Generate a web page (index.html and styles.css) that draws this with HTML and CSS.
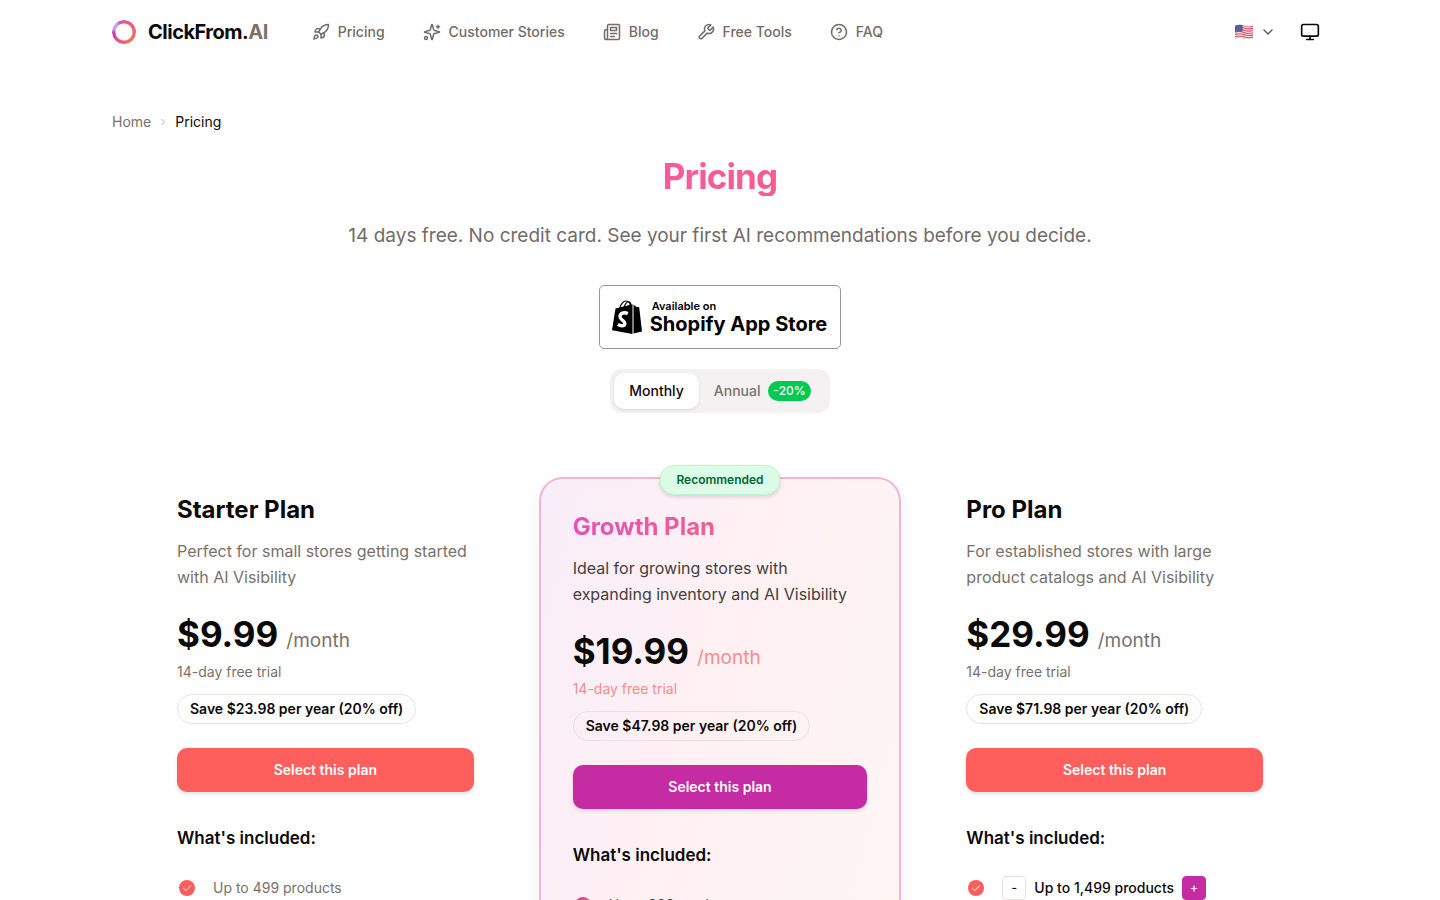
FILE: index.html
```html
<!DOCTYPE html>
<html lang="en">
<head>
<meta charset="utf-8">
<meta name="viewport" content="width=device-width, initial-scale=1">
<title>Pricing - ClickFrom.AI</title>
<link rel="stylesheet" href="styles.css">
</head>
<body>
<svg class="sprite" aria-hidden="true">
  <symbol id="check" viewBox="0 0 16 16"><path d="M4.600 8.400 7 10.600 11.500 5.800" fill="none" stroke="#fff" stroke-width="1" stroke-linecap="round" stroke-linejoin="round"/></symbol>
</svg>
<header class="header wrap">
  <a class="brand" href="#">
    <span class="ring"></span>
    <span>ClickFrom.<span class="brand-ai">AI</span></span>
  </a>
  <nav class="nav">
    <a href="#"><svg class="icon" viewBox="0 0 24 24"><path d="M4.5 16.5c-1.5 1.260-2 5-2 5s3.740-.5 5-2c.710-.840.700-2.130-.090-2.910a2.180 2.180 0 0 0-2.910-.090z"/><path d="m12 15-3-3a22 22 0 0 1 2-3.950A12.880 12.880 0 0 1 22 2c0 2.720-.780 7.500-6 11a22.350 22.350 0 0 1-4 2z"/><path d="M9 12H4s.550-3.030 2-4c1.620-1.080 5 0 5 0"/><path d="M12 15v5s3.030-.550 4-2c1.080-1.620 0-5 0-5"/></svg>Pricing</a>
    <a href="#"><svg class="icon" viewBox="0 0 24 24"><path d="M9.937 15.500A2 2 0 0 0 8.500 14.063l-6.135-1.582a.5.5 0 0 1 0-.962L8.500 9.936A2 2 0 0 0 9.937 8.500l1.582-6.135a.5.5 0 0 1 .963 0L14.063 8.500A2 2 0 0 0 15.500 9.937l6.135 1.581a.5.5 0 0 1 0 .964L15.500 14.063a2 2 0 0 0-1.437 1.437l-1.582 6.135a.5.5 0 0 1-.963 0z"/><path d="M20 3v4M22 5h-4"/><circle cx="4" cy="20" r="2"/></svg>Customer Stories</a>
    <a href="#"><svg class="icon" viewBox="0 0 24 24"><path d="M4 22h16a2 2 0 0 0 2-2V4a2 2 0 0 0-2-2H8a2 2 0 0 0-2 2v16a2 2 0 0 1-2 2Zm0 0a2 2 0 0 1-2-2v-9c0-1.100.9-2 2-2h2"/><path d="M18 14h-8M15 18h-5M10 6h8v4h-8V6Z"/></svg>Blog</a>
    <a href="#"><svg class="icon" viewBox="0 0 24 24"><path d="M14.700 6.300a1 1 0 0 0 0 1.400l1.600 1.600a1 1 0 0 0 1.400 0l3.770-3.770a6 6 0 0 1-7.940 7.940l-6.910 6.910a2.120 2.120 0 0 1-3-3l6.910-6.910a6 6 0 0 1 7.940-7.940l-3.760 3.760z"/></svg>Free Tools</a>
    <a href="#"><svg class="icon" viewBox="0 0 24 24"><circle cx="12" cy="12" r="10"/><path d="M9.090 9a3 3 0 0 1 5.830 1c0 2-3 3-3 3M12 17h.010"/></svg>FAQ</a>
  </nav>
  <div class="tools">
    <button class="lang" type="button" aria-label="Language: English">
      <svg class="flag" viewBox="0 0 20 16"><defs><clipPath id="wave"><path d="M1 2Q5.500-.300 10 1.500T19 1.500V14Q14.500 16 10 14.400T1 14.500Z"/></clipPath></defs><g clip-path="url(#wave)"><path fill="#f3eded" d="M0 0h20v16H0z"/><path d="M0 2Q5 0 10 1.800T20 1.800M0 4.200Q5 2.200 10 4T20 4M0 6.400Q5 4.400 10 6.200T20 6.200M0 8.600Q5 6.600 10 8.400T20 8.400M0 10.800Q5 8.800 10 10.600T20 10.600M0 13Q5 11 10 12.800T20 12.800M0 15.200Q5 13.200 10 15T20 15" fill="none" stroke="#d4485a" stroke-width="1.100"/><path fill="#4c5a91" d="M0 0h8.500v7.800Q5 6.800 0 8.400Z"/><path d="M2 3h6M2 5h6M2 7h6" stroke="#b9bfd8" stroke-width=".5" stroke-dasharray=".6 1"/></g></svg>
      <svg class="icon icon-small" viewBox="0 0 24 24"><path d="m6 9 6 6 6-6"/></svg>
    </button>
    <button class="theme" type="button" aria-label="Theme"><svg class="icon icon-large" viewBox="0 0 24 24"><rect x="2" y="3" width="20" height="14" rx="2"/><path d="M8 21h8M12 17v4"/></svg></button>
  </div>
</header>
<main class="wrap">
  <nav class="crumbs" aria-label="Breadcrumb">
    <a href="#">Home</a>
    <svg class="crumb-arrow" viewBox="0 0 24 24"><path d="m9 18 6-6-6-6"/></svg>
    <span class="current">Pricing</span>
  </nav>
  <section class="hero">
    <h1>Pricing</h1>
    <p>14 days free. No credit card. See your first AI recommendations before you decide.</p>
    <a class="store" href="#">
      <svg class="bag" viewBox="0 0 30 34"><path d="M3.500 8.500 20.500 4.200V34L0 30.300Z"/><path d="M21.500 4.500 24 6.800 27.200 7.300 30 31.600 21.500 33.500Z"/><path d="M7.500 9C8.500 4 11.500 1 14 1c3 0 4.500 3 4.500 7M12 8C12.500 4 15 1.500 16.800 1.800 18.500 2 19 4 19 6" fill="none" stroke="#000" stroke-width="1.200"/><path d="M15.800 13.600C12 11.800 8 13.200 8 16.700c0 3.600 4.900 3.700 4.900 6.800 0 2.900-4 2.900-7 .9" fill="none" stroke="#fff" stroke-width="3.400"/></svg>
      <span class="store-text"><span class="store-small">Available on</span><span class="store-big">Shopify App Store</span></span>
    </a>
    <div class="toggle">
      <button class="tab tab-on" type="button">Monthly</button>
      <button class="tab" type="button">Annual <span class="discount">-20%</span></button>
    </div>
  </section>
  <section class="plans">
    <article class="plan">
      <h2>Starter Plan</h2>
      <p class="desc">Perfect for small stores getting started with AI Visibility</p>
      <p class="price"><strong>$9.99</strong><span class="per">/month</span></p>
      <p class="trial">14-day free trial</p>
      <span class="save">Save $23.98 per year (20% off)</span>
      <button class="select" type="button">Select this plan</button>
      <h3>What's included:</h3>
      <ul class="features"><li><svg class="tick"><use href="#check"/></svg>Up to 499 products</li></ul>
    </article>
    <article class="plan plan-growth">
      <span class="recommended">Recommended</span>
      <h2>Growth Plan</h2>
      <p class="desc">Ideal for growing stores with expanding inventory and AI Visibility</p>
      <p class="price"><strong>$19.99</strong><span class="per">/month</span></p>
      <p class="trial">14-day free trial</p>
      <span class="save">Save $47.98 per year (20% off)</span>
      <button class="select" type="button">Select this plan</button>
      <h3>What's included:</h3>
      <ul class="features"><li><svg class="tick"><use href="#check"/></svg>Up to 999 products</li></ul>
    </article>
    <article class="plan">
      <h2>Pro Plan</h2>
      <p class="desc">For established stores with large product catalogs and AI Visibility</p>
      <p class="price"><strong>$29.99</strong><span class="per">/month</span></p>
      <p class="trial">14-day free trial</p>
      <span class="save">Save $71.98 per year (20% off)</span>
      <button class="select" type="button">Select this plan</button>
      <h3>What's included:</h3>
      <ul class="features"><li><svg class="tick"><use href="#check"/></svg><span class="stepper"><button class="step" type="button" aria-label="Fewer products">-</button><span>Up to 1,499 products</span><button class="step step-plus" type="button" aria-label="More products">+</button></span></li></ul>
    </article>
  </section>
</main>
</body>
</html>
```
FILE: styles.css
```css
* { box-sizing: border-box; }
body { margin: 0; background: #fff; color: #0c0a09; font-family: Inter, "Liberation Sans", sans-serif; font-size: 14px; line-height: 20px; }
h1, h2, h3, p, ul { margin: 0; padding: 0; }
a { color: inherit; text-decoration: none; }
button { font: inherit; color: inherit; border: 0; padding: 0; background: none; cursor: pointer; }
.sprite { position: absolute; width: 0; height: 0; }
.wrap { max-width: 1280px; margin: 0 auto; padding: 0 32px; }
.header { display: flex; align-items: center; height: 64px; }
.brand { display: flex; align-items: center; gap: 12px; font-size: 20px; line-height: 28px; font-weight: 700; letter-spacing: -0.025em; }
.brand-ai { color: #79716b; }
.ring { width: 24px; height: 24px; border-radius: 50%; background: conic-gradient(#e8539a, #f0655f 90deg, #f5704f 150deg, #e8508a 215deg, #c23bb5 265deg, #c9a0e8 285deg, #c9a0e8 320deg, #d94fb8 335deg, #e8539a); -webkit-mask: radial-gradient(circle, transparent 8px, #000 9px); mask: radial-gradient(circle, transparent 8px, #000 9px); }
.nav { display: flex; gap: 38px; margin-left: 44px; color: #736b69; font-weight: 500; }
.nav a { display: flex; align-items: center; gap: 8px; }
.icon { width: 18px; height: 18px; fill: none; stroke: currentColor; stroke-width: 2; stroke-linecap: round; stroke-linejoin: round; }
.icon-small { width: 16px; height: 16px; }
.icon-large { width: 20px; height: 20px; }
.tools { display: flex; align-items: center; gap: 8px; margin-left: auto; }
.lang { display: flex; align-items: center; gap: 6px; padding: 8px; color: #57534e; }
.flag { width: 20px; height: 16px; }
.theme { display: flex; padding: 8px; }
.crumbs { display: flex; align-items: center; gap: 6px; padding-top: 48px; color: #79716b; }
.crumb-arrow { width: 12px; height: 12px; fill: none; stroke: #b8b0ad; stroke-width: 2; }
.current { color: #0c0a09; }
.hero { display: flex; flex-direction: column; align-items: center; padding-top: 24px; }
h1 { font-size: 35px; line-height: 40px; font-weight: 700; letter-spacing: -0.025em; color: transparent; background: linear-gradient(90deg, #f55aa0, #f85d8c); -webkit-background-clip: text; background-clip: text; }
.hero p { margin-top: 24px; font-size: 19px; line-height: 32px; color: #736b69; text-align: center; }
.store { display: flex; align-items: center; gap: 8px; height: 64px; margin-top: 33px; padding: 0 13px 0 12px; border: 1px solid #999; border-radius: 5px; color: #000; }
.bag { width: 30px; height: 34px; }
.store-text { display: flex; flex-direction: column; }
.store-small { font-size: 11px; line-height: 14px; font-weight: 600; padding-left: 2px; }
.store-big { font-size: 20px; line-height: 22px; font-weight: 700; }
.toggle { display: flex; margin-top: 20px; padding: 4px; border-radius: 12px; background: #f3f1f1; font-weight: 500; }
.tab { display: flex; align-items: center; gap: 8px; height: 36px; padding: 0 15px; border-radius: 10px; color: #79716b; }
.tab-on { background: #fff; color: #0c0a09; box-shadow: 0 1px 3px rgba(0, 0, 0, .12); }
.discount { padding: 2px 5px; border-radius: 10px; background: #00c950; color: #fff; font-size: 12px; line-height: 16px; }
.plans { display: grid; grid-template-columns: repeat(3, minmax(0, 1fr)); gap: 32px; align-items: start; max-width: 1152px; margin: 48px auto 0; }
.plan { padding: 32px; border: 1px solid transparent; border-radius: 24px; display: flex; flex-direction: column; align-items: flex-start; }
.plan-growth { position: relative; margin-top: 16px; border: 2px solid #efb6d8; background: linear-gradient(105deg, #f9edf9, #fff1f3 50%, #fff6f4); box-shadow: 0 8px 20px rgba(0, 0, 0, .06); }
.recommended { position: absolute; top: -14px; left: 50%; transform: translateX(-50%); padding: 6px 16px; border: 1px solid #b9f8cf; border-radius: 15px; background: #dcfce7; color: #016630; font-size: 12px; line-height: 16px; font-weight: 600; box-shadow: 0 2px 4px rgba(0, 0, 0, .14); }
h2 { font-size: 24px; line-height: 32px; font-weight: 700; }
.plan-growth h2 { color: transparent; background: linear-gradient(90deg, #e352bd, #f85c8d); -webkit-background-clip: text; background-clip: text; }
.desc { margin-top: 12px; font-size: 16px; line-height: 26px; color: #79716b; }
.plan-growth .desc, .plan-growth .features { color: #44403b; }
.price { display: flex; align-items: baseline; gap: 8px; margin-top: 24px; line-height: 40px; }
.price strong { font-size: 35px; font-weight: 700; }
.per { font-size: 19px; line-height: 20px; color: #79716b; }
.trial { margin-top: 8px; color: #79716b; }
.plan-growth .per, .plan-growth .trial { color: #fa8b8b; }
.save { margin-top: 12px; padding: 4px 12px; border: 1px solid #e7e2e2; border-radius: 15px; font-weight: 600; }
.select { width: 100%; height: 44px; margin-top: 24px; border-radius: 10px; background: #ff5f5c; color: #fff; font-weight: 600; box-shadow: 0 2px 4px rgba(0, 0, 0, .12); }
.plan-growth .select { background: #c52ba2; }
h3 { margin-top: 32px; font-size: 17px; line-height: 28px; font-weight: 600; }
.features { margin-top: 24px; list-style: none; color: #79716b; }
.features li { display: flex; align-items: center; gap: 16px; min-height: 24px; }
.tick { width: 16px; height: 16px; margin: 0 2px; border-radius: 50%; background: #ff5f5c; }
.plan-growth .tick { background: linear-gradient(90deg, #c93aa6, #f4586f); }
.stepper { display: flex; align-items: center; gap: 8px; color: #0c0a09; font-weight: 500; }
.step { width: 24px; height: 24px; border: 1px solid #e7e2e2; border-radius: 4px; font-size: 12px; line-height: 16px; }
.step-plus { border-color: #c52ba2; background: #c52ba2; color: #fff; }
```
